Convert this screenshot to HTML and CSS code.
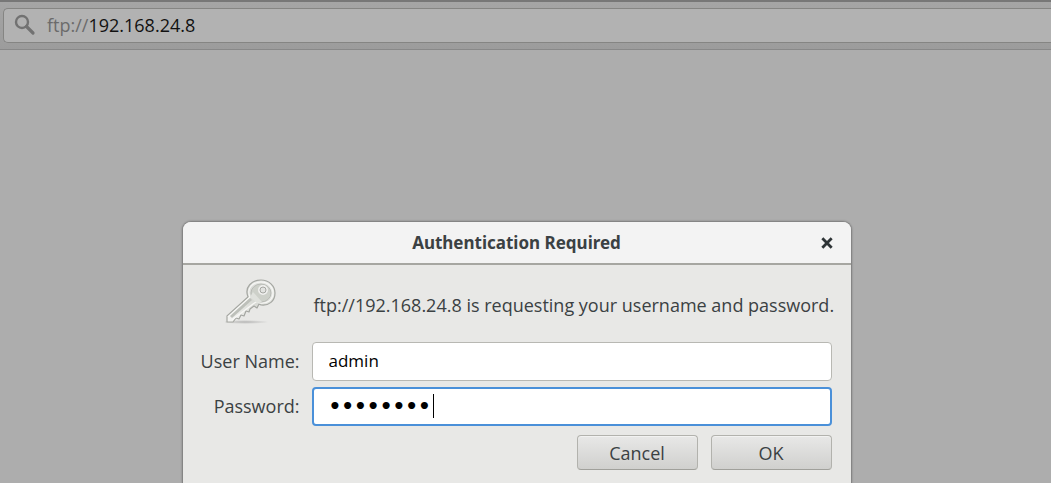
FILE: index.html
```html
<!DOCTYPE html>
<html lang="en">
<head>
    <meta charset="UTF-8">
    <meta name="viewport" content="width=device-width, initial-scale=1.0">
    <title>Authentication Required</title>
    <link rel="stylesheet" href="styles.css">
</head>
<body>
    <header class="toolbar">
        <div class="address">
            <svg class="search-icon" viewBox="0 0 22 22" aria-hidden="true">
                <circle cx="8" cy="8" r="6" fill="none" stroke="#727272" stroke-width="2.4"/>
                <path d="M12.5 12.5L19 19" stroke="#727272" stroke-width="3.2" stroke-linecap="round"/>
            </svg>
            <a href="ftp://192.168.24.8" class="url"><span class="scheme">ftp://</span>192.168.24.8</a>
        </div>
    </header>

    <main class="page">
        <form class="dialog" role="dialog" aria-labelledby="title">
            <div class="titlebar">
                <h1 id="title">Authentication Required</h1>
                <button type="button" class="close" aria-label="Close">
                    <svg viewBox="0 0 12 12" aria-hidden="true">
                        <path d="M2 2L10 10M10 2L2 10" stroke="#2e3436" stroke-width="2.4"/>
                    </svg>
                </button>
            </div>

            <div class="content">
                <svg class="key" viewBox="0 0 52 48" aria-hidden="true">
                    <defs>
                        <linearGradient id="metal" x1="0" y1="1" x2="1" y2="0">
                            <stop offset="0" stop-color="#f6f6f4"/>
                            <stop offset="0.55" stop-color="#d6d8d3"/>
                            <stop offset="1" stop-color="#eff0ed"/>
                        </linearGradient>
                        <radialGradient id="shadow">
                            <stop offset="0" stop-color="#777" stop-opacity="0.45"/>
                            <stop offset="1" stop-color="#777" stop-opacity="0"/>
                        </radialGradient>
                    </defs>
                    <ellipse cx="20" cy="43" rx="24" ry="2" fill="url(#shadow)"/>
                    <path d="M2 43L2 37L23 18C19 8 27 1 36 1C44 1 50 7 50 14C50 22 44 27 36 26L34 25L32 29L29 27L25 30L24 33L21 32L19 37L16 36L14 40L11 39L8 43Z" fill="url(#metal)" stroke="#a5a7a2" stroke-width="1.2" stroke-linejoin="round"/>
                    <path d="M3 38L25 18C21 9 28 3 36 3C43 3 48 8 48 14C48 21 42 25 35 24L31 23L28 25L7 41" fill="none" stroke="#f7f7f5" stroke-width="1.2"/>
                    <ellipse cx="36" cy="14" rx="10" ry="9" fill="#cdd0c9" stroke="#b9bbb6"/>
                    <path d="M25 18L32 24L37 23L28 13Z" fill="#dfe1dc"/>
                    <path d="M6 38L26 20" stroke="#bdc0ba" stroke-width="3"/>
                    <circle cx="38" cy="11" r="4" fill="#dfe1dc" stroke="#f0f0ee" stroke-width="2"/>
                    <circle cx="38" cy="11" r="3" fill="#e2e3e0" stroke="#a5a7a2"/>
                </svg>
                <p class="message">ftp://192.168.24.8 is requesting your username and password.</p>

                <label for="username">User Name:</label>
                <input type="text" id="username" value="admin">

                <label for="password">Password:</label>
                <div class="password-field">
                    <input type="password" id="password" value="password" autofocus>
                    <span class="caret"></span>
                </div>

                <div class="actions">
                    <button type="button">Cancel</button>
                    <button type="submit">OK</button>
                </div>
            </div>
        </form>
    </main>

    <script>
        const password = document.getElementById('password');
        password.focus();
        password.setSelectionRange(password.value.length, password.value.length);
    </script>
</body>
</html>
```

FILE: styles.css
```css
* {
    box-sizing: border-box;
}

body {
    font-family: "Open Sans", "Noto Sans", sans-serif;
    font-size: 18px;
    line-height: 24px;
    color: #3b4143;
    display: flex;
    flex-direction: column;
    height: 100vh;
    margin: 0;
    overflow: hidden;
    background-color: #adadad;
}

.toolbar {
    padding: 6px 0;
    padding-left: 3px;
    border-top: 2px solid #777;
    border-bottom: 1px solid #888;
    background: linear-gradient(#a5a5a5, #9c9c9c);
}

.address {
    display: flex;
    align-items: center;
    gap: 11px;
    height: 35px;
    padding: 0 0 2px 10px;
    border: 1px solid #858583;
    border-width: 1px 0 1px 1px;
    border-radius: 5px 0 0 5px;
    background-color: #b2b2b2;
}

.search-icon {
    width: 22px;
    height: 22px;
}

.url {
    color: #111;
    text-decoration: none;
}

.scheme {
    color: #6b6b6b;
}

.page {
    display: flex;
    flex: 1;
    justify-content: center;
    padding: 171px 18px 0 0;
}

.dialog {
    display: flex;
    flex-direction: column;
    width: 100%;
    max-width: 670px;
    border: 1px solid #858585;
    border-bottom: none;
    border-radius: 9px 9px 0 0;
    background-color: #e8e8e6;
    box-shadow: 0 0 2px rgba(0, 0, 0, 0.3);
}

.titlebar {
    display: grid;
    grid-template-columns: 36px 1fr 36px;
    align-items: center;
    height: 43px;
    padding: 0 6px;
    border-bottom: 2px solid #a6a6a1;
    border-radius: 8px 8px 0 0;
    background-color: #f3f3f3;
}

.titlebar h1 {
    grid-column: 2;
    margin: 0;
    font-family: "Noto Sans", sans-serif;
    font-size: 17px;
    text-align: center;
}

.close {
    height: 32px;
    padding: 0;
    border: none;
    background: none;
}

.close svg {
    width: 14px;
    height: 14px;
    vertical-align: middle;
}

.content {
    display: grid;
    grid-template-columns: 99px minmax(0, 1fr);
    column-gap: 12px;
    row-gap: 6px;
    align-items: center;
    padding: 14px 19px 12px 18px;
}

.key {
    align-self: start;
    width: 52px;
    height: 48px;
    margin-left: 24px;
}

.message {
    margin: 0;
    padding: 14px 0 19px 2px;
    white-space: nowrap;
}

label {
    padding-bottom: 2px;
    text-align: right;
}

input {
    display: block;
    width: 100%;
    height: 39px;
    padding: 0 16px 2px;
    border: 1px solid #b8b8b3;
    border-radius: 4px;
    background-color: #fff;
    color: #000;
    font: inherit;
    font-size: 17px;
}

input:focus {
    border: 2px solid #4a90d9;
    outline: none;
}

.password-field {
    position: relative;
}

.password-field input {
    padding: 0 15px 2px;
    font-family: "DejaVu Sans", sans-serif;
    font-size: 20px;
    font-weight: bold;
    caret-color: transparent;
}

/* steady text cursor after the last bullet */
.caret {
    position: absolute;
    top: 7px;
    left: 121px;
    width: 1px;
    height: 24px;
    background-color: #000;
}

.actions {
    grid-column: span 2;
    display: flex;
    justify-content: flex-end;
    gap: 13px;
    padding-top: 3px;
}

.actions button {
    width: 121px;
    height: 35px;
    border: 1px solid #b2b2ad;
    border-bottom-color: #a0a09b;
    border-radius: 4px;
    background: linear-gradient(#e8e8e7, #d0d0ce);
    box-shadow: inset 0 1px #f2f2f1;
    color: inherit;
    font: inherit;
}
```
